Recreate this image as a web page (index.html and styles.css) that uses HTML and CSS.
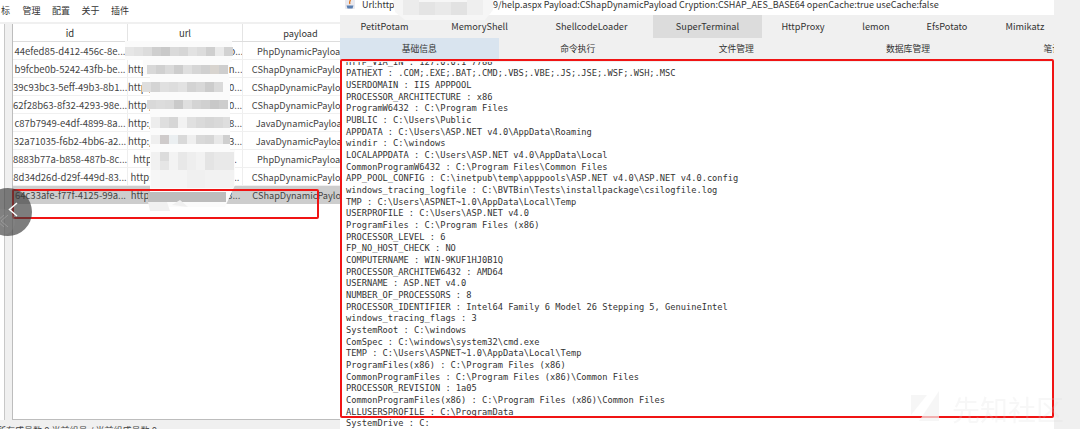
FILE: index.html
```html
<!DOCTYPE html>
<html lang="zh">
<head>
<meta charset="utf-8">
<title>Godzilla</title>
<link rel="stylesheet" href="styles.css">
</head>
<body>
<div class="app">
  <section class="left">
    <nav class="menu">
      <span class="menu-cut">标</span><span>管理</span><span>配置</span><span>关于</span><span>插件</span>
    </nav>
    <div class="table-area">
      <div class="strip"></div>
      <div class="table">
        <div class="row head"><div>id</div><div>url</div><div>payload</div></div>
        <div class="row"><div>44efed85-d412-456c-8e...</div><div>http://10.20.30.40:80/ho...</div><div>PhpDynamicPayload</div></div>
        <div class="row"><div>b9fcbe0b-5242-43fb-be...</div><div>http://10.20.30.40:80/an...</div><div>CShapDynamicPayload</div></div>
        <div class="row"><div>39c93bc3-5eff-49b3-8b1...</div><div>http://10.20.30.40:80/00...</div><div>CShapDynamicPayload</div></div>
        <div class="row"><div>62f28b63-8f32-4293-98e...</div><div>http://10.20.30.40:800/0...</div><div>CShapDynamicPayload</div></div>
        <div class="row"><div>c87b7949-e4df-4899-8a...</div><div>http://10.20.30.40:801/8...</div><div>JavaDynamicPayload</div></div>
        <div class="row"><div>32a71035-f6b2-4bb6-a2...</div><div>http://10.20.30.40:801/3...</div><div>JavaDynamicPayload</div></div>
        <div class="row"><div>8883b77a-b858-487b-8c...</div><div>http://10.20.30.40:80/...</div><div>PhpDynamicPayload</div></div>
        <div class="row"><div>8d34d26d-d29f-449d-83...</div><div>http://10.20.30.40:80/o...</div><div>CShapDynamicPayload</div></div>
        <div class="row selected"><div>64c33afe-f77f-4125-99a...</div><div>https://110.20.30.140:8...</div><div>CShapDynamicPayload</div></div>
      </div>
    </div>
    <div class="status">所有成员数:9 当前组员:/ 当前组成员数:9</div>

    <svg class="mosaic" width="120" height="190" viewBox="0 0 120 190" aria-hidden="true">
      <path d="M0 6H107V27H104V45H105V115H110V150L100 172H25V40H18V25H0Z" fill="#fbfbfb"/>
      <g fill="#d2d2d2">
        <rect x="0" y="12" width="9" height="9" fill="#e6e6e6"/><rect x="9" y="12" width="9" height="9" fill="#e2e2e2"/><rect x="18" y="12" width="9" height="9" fill="#dcdcdc"/><rect x="27" y="12" width="9" height="9" fill="#cfcfcf"/><rect x="36" y="12" width="9" height="9" fill="#c9c9c9"/><rect x="45" y="12" width="9" height="9" fill="#dadada"/><rect x="54" y="12" width="9" height="9" fill="#d6d6d6"/><rect x="63" y="12" width="9" height="9" fill="#e2e2e2"/><rect x="72" y="12" width="9" height="9" fill="#dcdcdc"/><rect x="81" y="12" width="9" height="9" fill="#cfcfcf"/><rect x="90" y="12" width="9" height="9" fill="#eaeaea"/><rect x="99" y="12" width="9" height="9" fill="#d2d2d2"/>
        <rect x="22" y="30" width="9" height="9" fill="#d8d8d8"/><rect x="31" y="30" width="9" height="9" fill="#d0d0d0"/><rect x="40" y="30" width="9" height="9" fill="#dadada"/><rect x="49" y="30" width="9" height="9" fill="#cdcdcd"/><rect x="58" y="30" width="9" height="9" fill="#dfdfdf"/><rect x="67" y="30" width="9" height="9" fill="#d6d6d6"/><rect x="76" y="30" width="9" height="9" fill="#d0d0d0"/><rect x="85" y="30" width="9" height="9" fill="#d8d4cf"/><rect x="94" y="30" width="9" height="9" fill="#cecece"/>
        <rect x="17" y="47" width="9" height="10" fill="#dedede"/><rect x="26" y="47" width="9" height="10" fill="#d4d4d4"/><rect x="35" y="47" width="9" height="10" fill="#e0e0e0"/><rect x="44" y="47" width="9" height="10" fill="#dddddd"/><rect x="53" y="47" width="9" height="10" fill="#e2e2e2"/><rect x="62" y="47" width="9" height="10" fill="#d3d3d3"/><rect x="71" y="47" width="9" height="10" fill="#d8d8d8"/><rect x="80" y="47" width="9" height="10" fill="#cccccc"/><rect x="89" y="47" width="9" height="10" fill="#dadada"/>
        <rect x="22" y="65" width="9" height="9" fill="#d9d9d9"/><rect x="31" y="65" width="9" height="9" fill="#dcdcdc"/><rect x="40" y="65" width="9" height="9" fill="#dadada"/><rect x="49" y="65" width="9" height="9" fill="#cacaca"/><rect x="58" y="65" width="9" height="9" fill="#dfdfdf"/><rect x="67" y="65" width="9" height="9" fill="#d4d4d4"/><rect x="76" y="65" width="9" height="9" fill="#d0d0d0"/><rect x="85" y="65" width="9" height="9" fill="#c8c8c8"/><rect x="94" y="65" width="9" height="9" fill="#cdcdcd"/>
        <rect x="26" y="82" width="9" height="11" fill="#ededed"/><rect x="35" y="82" width="9" height="11" fill="#dedede"/><rect x="44" y="82" width="9" height="11" fill="#d6d6d6"/><rect x="53" y="82" width="9" height="11" fill="#f2f2f2"/><rect x="62" y="82" width="9" height="11" fill="#e0e0e0"/><rect x="71" y="82" width="9" height="11" fill="#dadada"/><rect x="80" y="82" width="9" height="11" fill="#d6d6d6"/><rect x="89" y="82" width="9" height="11" fill="#d9d9d9"/><rect x="98" y="82" width="7" height="11" fill="#dedede"/>
        <rect x="26" y="100" width="9" height="9" fill="#efefef"/><rect x="35" y="100" width="9" height="9" fill="#cfcbcb"/><rect x="44" y="100" width="9" height="9" fill="#ebeff1"/><rect x="53" y="100" width="9" height="9" fill="#d9d9d9"/><rect x="62" y="100" width="9" height="9" fill="#efefef"/><rect x="71" y="100" width="9" height="9" fill="#d9d9d9"/><rect x="80" y="100" width="9" height="9" fill="#d6d6d6"/><rect x="89" y="100" width="9" height="9" fill="#e8e8e8"/><rect x="98" y="100" width="7" height="9" fill="#cfcfcf"/>
        <rect x="26" y="117" width="9" height="18" fill="#f1f1f1"/><rect x="35" y="117" width="9" height="9" fill="#dcdcdc"/><rect x="35" y="126" width="9" height="9" fill="#e6e6e6"/><rect x="44" y="117" width="9" height="18" fill="#f3f3f3"/><rect x="53" y="117" width="9" height="18" fill="#e8e8e8"/><rect x="62" y="117" width="9" height="18" fill="#eeeeee"/><rect x="71" y="117" width="9" height="18" fill="#f2f2f2"/><rect x="80" y="117" width="9" height="18" fill="#e4e4e4"/><rect x="89" y="117" width="20" height="18" fill="#e9e9e9"/>
        <rect x="26" y="135" width="9" height="18" fill="#f6f6f6"/><rect x="35" y="135" width="27" height="18" fill="#f4f4f4"/><rect x="62" y="135" width="18" height="18" fill="#f0f0f0"/><rect x="80" y="135" width="29" height="18" fill="#f2f2f2"/>
        <rect x="23" y="157" width="78" height="10" fill="#bdbdbd"/>
      </g>
      <path d="M23 167H42L45 176H25ZM47 170L55 165L63 172Z" fill="#f0f0f0"/>
    </svg>

    <div class="row-mark"></div>

    <svg class="backbtn" width="40" height="56" viewBox="0 0 40 56" aria-hidden="true">
      <circle cx="8" cy="32" r="24" fill="#3a3a3a" fill-opacity=".66"/>
      <circle cx="2" cy="42" r="13" fill="#8a8a8a" fill-opacity=".35"/>
      <path d="M17 23L9.500 29.500L17 36" fill="none" stroke="#fff" stroke-width="1.500"/>
      <path d="M8 35L1 41L8 47M4 35L-3 41L4 47" fill="none" stroke="#999" stroke-width="1"/>
    </svg>
  </section>

  <main class="right">
    <header class="titlebar">
      <svg class="javaicon" width="12" height="13" viewBox="0 0 12 13" aria-hidden="true">
        <rect x="1" y="1" width="10" height="11" rx="1" fill="#e9e9ef"/>
        <path d="M6 1.500C7.500 3.500 4.500 4.500 6 7" fill="none" stroke="#e2761e" stroke-width="1.300"/>
        <path d="M2.500 8.500H9.500L8.500 11.500H3.500Z" fill="#5a7fb0"/>
      </svg>
      <span class="url-head">Url:http</span><span>9/help.aspx Payload:CShapDynamicPayload Cryption:CSHAP_AES_BASE64 openCache:true useCache:false</span>
      <svg class="title-blur" width="102" height="22" viewBox="0 0 102 22" aria-hidden="true">
        <path d="M0 0H100V10L92 20H12L2 12Z" fill="#f6f6f6"/>
        <rect x="10" y="0" width="16" height="15" fill="#ececec"/><rect x="26" y="2" width="16" height="13" fill="#e4e4e4"/><rect x="42" y="2" width="16" height="13" fill="#e9e9e9"/><rect x="58" y="2" width="16" height="13" fill="#e2e2e2"/><rect x="74" y="0" width="16" height="15" fill="#efefef"/>
      </svg>
    </header>
    <div class="tabs">
      <span>PetitPotam</span><span>MemoryShell</span><span>ShellcodeLoader</span><span class="on">SuperTerminal</span><span>HttpProxy</span><span>lemon</span><span>EfsPotato</span><span>Mimikatz</span>
    </div>
    <div class="subtabs">
      <span class="sub sub-on">基础信息</span><span class="sub">命令执行</span><span class="sub">文件管理</span><span class="sub sub-wide">数据库管理</span><span class="sub sub-last">笔记</span>
    </div>
    <div class="output">
      <pre class="log">HTTP_VIA_IN : 127.0.0.1 7788
PATHEXT : .COM;.EXE;.BAT;.CMD;.VBS;.VBE;.JS;.JSE;.WSF;.WSH;.MSC
USERDOMAIN : IIS APPPOOL
PROCESSOR_ARCHITECTURE : x86
ProgramW6432 : C:\Program Files
PUBLIC : C:\Users\Public
APPDATA : C:\Users\ASP.NET v4.0\AppData\Roaming
windir : C:\windows
LOCALAPPDATA : C:\Users\ASP.NET v4.0\AppData\Local
CommonProgramW6432 : C:\Program Files\Common Files
APP_POOL_CONFIG : C:\inetpub\temp\apppools\ASP.NET v4.0\ASP.NET v4.0.config
windows_tracing_logfile : C:\BVTBin\Tests\installpackage\csilogfile.log
TMP : C:\Users\ASPNET~1.0\AppData\Local\Temp
USERPROFILE : C:\Users\ASP.NET v4.0
ProgramFiles : C:\Program Files (x86)
PROCESSOR_LEVEL : 6
FP_NO_HOST_CHECK : NO
COMPUTERNAME : WIN-9KUF1HJ0B1Q
PROCESSOR_ARCHITEW6432 : AMD64
USERNAME : ASP.NET v4.0
NUMBER_OF_PROCESSORS : 8
PROCESSOR_IDENTIFIER : Intel64 Family 6 Model 26 Stepping 5, GenuineIntel
windows_tracing_flags : 3
SystemRoot : C:\windows
ComSpec : C:\windows\system32\cmd.exe
TEMP : C:\Users\ASPNET~1.0\AppData\Local\Temp
ProgramFiles(x86) : C:\Program Files (x86)
CommonProgramFiles : C:\Program Files (x86)\Common Files
PROCESSOR_REVISION : 1a05
CommonProgramFiles(x86) : C:\Program Files (x86)\Common Files
ALLUSERSPROFILE : C:\ProgramData
SystemDrive : C:</pre>
    </div>
    <div class="output-mark"></div>
  </main>
  <aside class="gutter"></aside>

  <div class="watermark">
    <svg width="32" height="36" viewBox="0 0 32 36" aria-hidden="true">
      <path d="M1 4H17L1 24ZM29 0V30H9Z" fill="#f2f2f2" fill-opacity=".7"/>
    </svg>
    <span>先知社区</span>
  </div>
</div>
</body>
</html>
```
FILE: styles.css
```css
* { box-sizing: border-box; }
html, body { margin: 0; height: 100%; overflow: hidden; background: #f0f0f0; }
.app {
  position: relative;
  display: flex;
  width: 1080px;
  height: 429px;
  overflow: hidden;
  font-family: "Noto Sans CJK SC", "Noto Sans", sans-serif;
  color: #333;
  filter: blur(0.4px);
}

/* left pane */
.left { position: relative; width: 340px; flex: none; display: flex; flex-direction: column; background: #f0f0f0; }
.menu { height: 22px; background: #fff; display: flex; align-items: center; gap: 11.5px; font-size: 9px; line-height: 20px; overflow: hidden; flex: none; }
.menu-cut { margin-left: 1px; margin-right: 1px; }
.table-area { height: 396px; margin-top: 2px; display: flex; flex: none; }
.strip { width: 5px; background: #fff; border-right: 1px solid #c8c8c8; flex: none; }
.table { margin-left: 7px; flex: 1; min-width: 0; background: #fff; border-left: 1px solid #bdbdbd; border-bottom: 1px solid #bdbdbd; overflow: hidden; }
.row { display: grid; grid-template-columns: 115px 115px 118px; height: 18.12px; font-size: 9.5px; line-height: 18px; color: #444; white-space: nowrap; border-bottom: 1px solid #f0f0f0; }
.row > div { overflow: hidden; text-align: center; border-right: 1px solid #eee; }
.row > div:nth-child(3) { font-size: 9.2px; }
.head { height: 17.5px; border-bottom: 1px solid #ddd; color: #333; background: #fff; }
.head > div { border-right: 1px solid #e4e4e4; }
.head > div:nth-child(3) { padding-right: 2px; }
.selected { background: #cdcdcd; border-bottom: 0; }
.selected > div { border-right: 0; }
.status { font-size: 9px; line-height: 12px; padding-top: 5px; margin-left: -3px; white-space: nowrap; flex: none; color: #444; }

.mosaic { position: absolute; left: 125px; top: 35px; }
.row-mark { position: absolute; left: 12px; top: 189px; width: 307px; height: 30px; border: 2px solid #f01414; border-radius: 2px; }
.backbtn { position: absolute; left: 0; top: 180px; }

/* right pane */
.right { position: relative; width: 714px; flex: none; display: flex; flex-direction: column; background: #fff; overflow: hidden; }
.titlebar { position: relative; height: 15px; flex: none; display: flex; align-items: flex-start; background: #fff; font-size: 9px; line-height: 9px; white-space: nowrap; color: #333; }
.javaicon { margin: -3px 6px 0 4px; flex: none; }
.url-head { width: 131px; flex: none; }
.title-blur { position: absolute; left: 53px; top: 0; }
.tabs { height: 23px; flex: none; display: grid; grid-template-columns: 89px 101px 123px 109px 82px 64px 78px 78px; background: #f0f0f0; font-size: 9.2px; line-height: 23px; white-space: nowrap; text-align: center; }
.tabs > .on { background: #dcdcdc; }
.subtabs { height: 24px; flex: none; display: flex; align-items: flex-start; background: #f0f0f0; font-size: 8.8px; line-height: 21px; white-space: nowrap; }
.sub { width: 158.5px; flex: none; text-align: center; }
.sub-on { background: #d9e4ef; }
.sub-wide { width: 185px; }
.sub-last { width: 54px; text-align: left; padding-left: 43px; overflow: hidden; }
.output { flex: 1; min-height: 0; padding-left: 6px; overflow: hidden; }
.log { margin: -5.4px 0 0; font-family: "DejaVu Sans Mono", "Liberation Mono", monospace; font-size: 8.7px; line-height: 11.67px; color: #333; }
.output-mark { position: absolute; left: 0; top: 59px; width: 714px; height: 359px; border: 2px solid #f01414; border-radius: 2px; }

.gutter { flex: 1; background: #f0f0f0; }

.watermark { position: absolute; left: 910px; top: 391px; display: flex; align-items: center; gap: 10px; font-size: 28px; line-height: 32px; color: rgba(215, 215, 215, 0.2); white-space: nowrap; }
```
